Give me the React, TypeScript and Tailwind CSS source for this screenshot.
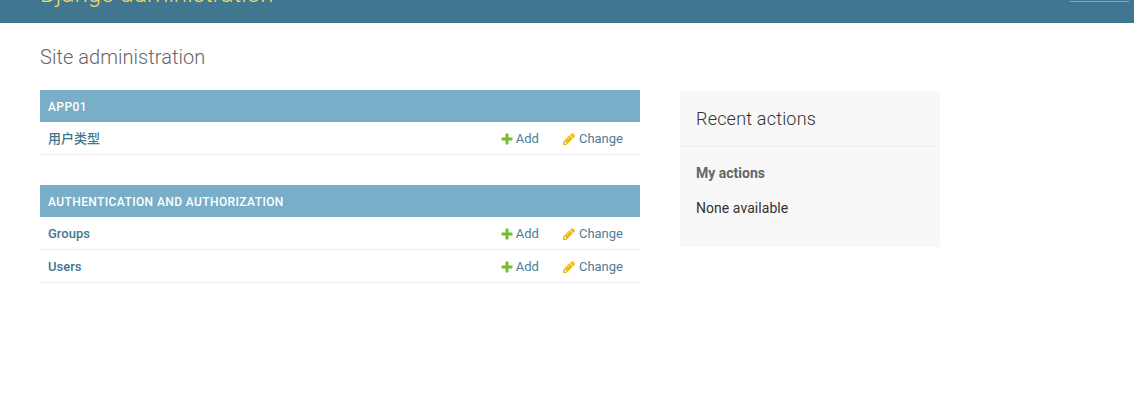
const roboto = "font-['Roboto','Noto_Sans_CJK_SC',sans-serif]";

function AddIcon() {
  return (
    <svg width="14" height="14" viewBox="0 0 1792 1792" className="shrink-0">
      <path
        fill="#70bf2b"
        d="M1600 796v192q0 40-28 68t-68 28h-416v416q0 40-28 68t-68 28h-192q-40 0-68-28t-28-68v-416h-416q-40 0-68-28t-28-68v-192q0-40 28-68t68-28h416v-416q0-40 28-68t68-28h192q40 0 68 28t28 68v416h416q40 0 68 28t28 68z"
      />
    </svg>
  );
}

function ChangeIcon() {
  return (
    <svg width="14" height="14" viewBox="0 0 1792 1792" className="shrink-0">
      <path
        fill="#efb80b"
        d="M491 1536l91-91-235-235-91 91v107h128v128h107zm523-928q0-22-22-22-10 0-17 7l-542 542q-7 7-7 17 0 22 22 22 10 0 17-7l542-542q7-7 7-17zm-54-192l416 416-832 832h-416v-416zm683 96q0 53-37 90l-166 166-416-416 166-165q36-38 90-38 53 0 91 38l235 234q37 39 37 91z"
      />
    </svg>
  );
}

function Row({ name }: { name: string }) {
  return (
    <div className="flex h-[33px] items-center border-b border-[#eeeeee] pl-2 pr-[17px] pt-0.5 text-[13px] leading-4">
      <a className="flex-1 font-medium text-[#417690]">{name}</a>
      <a className="flex items-center gap-0.5 text-[#4d7d96]">
        <AddIcon />
        Add
      </a>
      <a className="ml-[23px] flex items-center gap-[3px] text-[#4d7d96]">
        <ChangeIcon />
        Change
      </a>
    </div>
  );
}

function Module({ title, rows }: { title: string; rows: string[] }) {
  return (
    <section className="mb-[30px]">
      <div className="flex h-[32px] items-center bg-[#79aec8] px-2 pt-0.5 text-[12px] font-medium uppercase tracking-[0.4px] text-white">
        {title}
      </div>
      {rows.map((r) => (
        <Row key={r} name={r} />
      ))}
    </section>
  );
}

export default function App() {
  return (
    <div className={`${roboto} h-[405px] w-[1134px] overflow-hidden bg-white`}>
      <header className="relative flex h-[23px] items-end overflow-hidden bg-[#417690] px-10">
        <div className="mb-[14px] text-[24px] font-light leading-[30px] tracking-[0.1px] text-[#f5dd5d]">
          Django administration
        </div>
        <div className="absolute right-[5px] top-px h-px w-[59px] bg-[#79aec8]" />
      </header>

      <main className="px-10 pt-5">
        <h1 className="mb-[21px] h-[26px] text-[20px] font-light leading-[28px] tracking-[0.05px] text-[#666666]">
          Site administration
        </h1>
        <div className="flex items-start">
          <div className="w-[600px]">
            <Module title="App01" rows={["用户类型"]} />
            <Module title="Authentication and Authorization" rows={["Groups", "Users"]} />
          </div>
          <aside className="ml-10 mt-px h-[156px] w-[260px] bg-[#f8f8f8]">
            <h2 className="flex h-[56px] items-center border-b border-[#eeeeee] px-4 text-[18px] font-light tracking-[0.2px] text-[#333333]">
              Recent actions
            </h2>
            <h3 className="mt-[18px] px-4 text-[14px] font-bold leading-4 text-[#666666]">My actions</h3>
            <p className="mt-[19px] px-4 text-[14px] leading-4 tracking-[0.05px] text-[#333333]">None available</p>
          </aside>
        </div>
      </main>
    </div>
  );
}
